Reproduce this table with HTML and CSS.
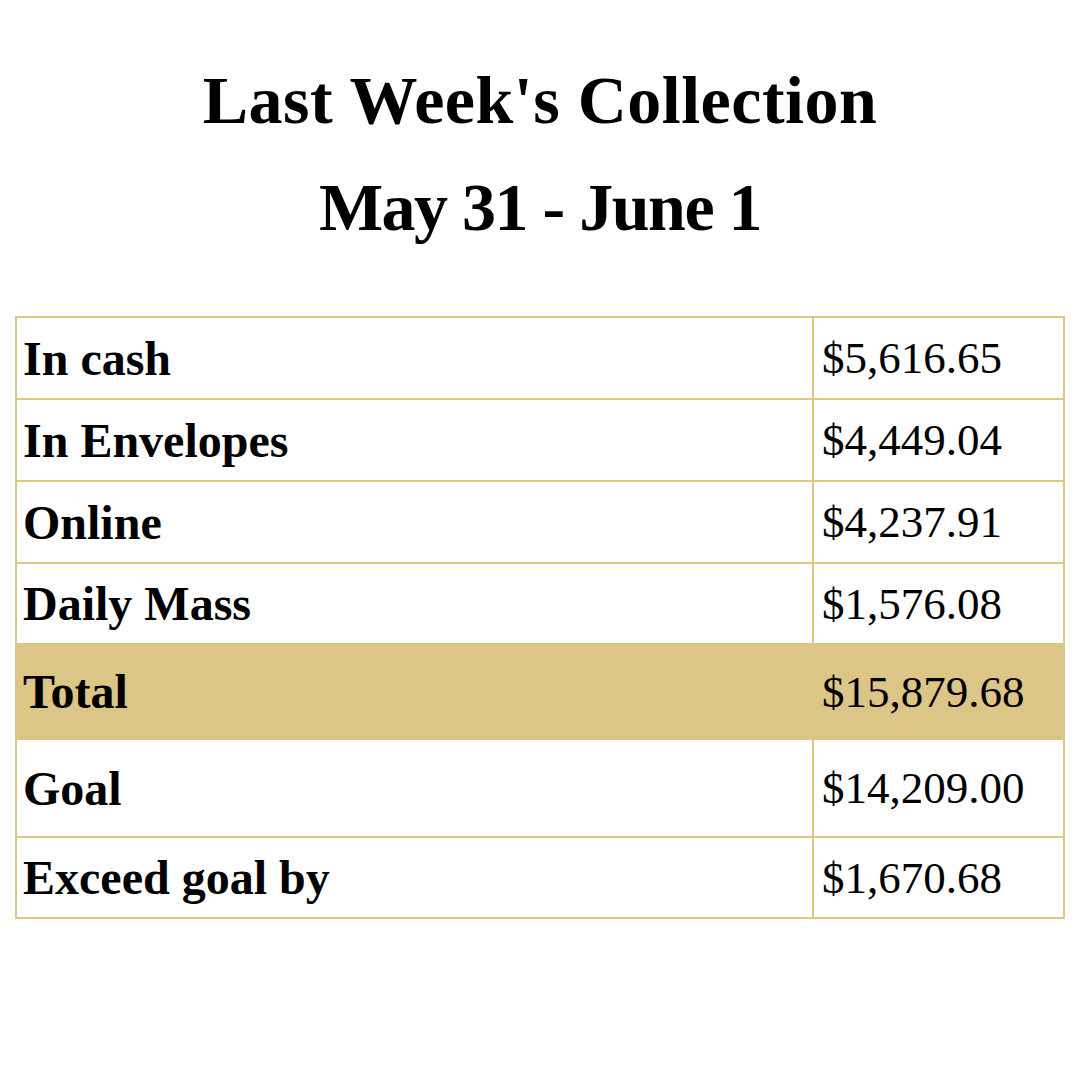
FILE: index.html
```html
<!DOCTYPE html>
<html>
<head>
<meta charset="utf-8">
<link rel="stylesheet" href="styles.css">
</head>
<body>
<div class="page">
  <h1 class="title"><span class="line1">Last Week's Collection</span><br><span class="line2">May 31 - June 1</span></h1>
  <div class="table">
    <div class="row first"><div class="label">In cash</div><div class="value">$5,616.65</div></div>
    <div class="row"><div class="label">In Envelopes</div><div class="value">$4,449.04</div></div>
    <div class="row"><div class="label">Online</div><div class="value">$4,237.91</div></div>
    <div class="row short"><div class="label">Daily Mass</div><div class="value">$1,576.08</div></div>
    <div class="row total"><div class="label">Total</div><div class="value">$15,879.68</div></div>
    <div class="row goal"><div class="label">Goal</div><div class="value">$14,209.00</div></div>
    <div class="row last"><div class="label">Exceed goal by</div><div class="value">$1,670.68</div></div>
  </div>
</div>
</body>
</html>
```

FILE: styles.css
```css
html, body {
  margin: 0;
  padding: 0;
  background: #ffffff;
}
.page {
  width: 1080px;
  height: 1080px;
  padding-top: 47px;
  box-sizing: border-box;
  font-family: "Liberation Serif", "Times New Roman", serif;
  color: #000;
}
.title {
  margin: 0 0 55px 0;
  text-align: center;
  font-size: 68px;
  line-height: 107px;
  font-weight: bold;
}
.title .line1 {
  letter-spacing: 0.5px;
}
.title .line2 {
  letter-spacing: -1.5px;
}
.table {
  margin-left: 15px;
  width: 1050px;
}
.row {
  display: grid;
  grid-template-columns: 797px 1fr;
  height: 82px;
  box-sizing: border-box;
  border-left: 2px solid #dec780;
  border-right: 2px solid #dec780;
  border-top: 2px solid #dec780;
}
.row.short {
  height: 81px;
}
.row .label {
  display: flex;
  align-items: center;
  padding-left: 6px;
  border-right: 2px solid #dec780;
  font-weight: bold;
  font-size: 48px;
}
.row .value {
  display: flex;
  align-items: center;
  padding-left: 8px;
  font-size: 45px;
}
.row.total {
  height: 97px;
  border: none;
  background: #dbc687;
  grid-template-columns: 799px 1fr;
}
.row.total .label {
  border-right: none;
  padding-left: 8px;
}
.row.total .value {
  padding-left: 8px;
}
.row.goal {
  height: 96px;
  border-top: none;
}
.row.last {
  height: 83px;
  border-bottom: 2px solid #dec780;
}
```
